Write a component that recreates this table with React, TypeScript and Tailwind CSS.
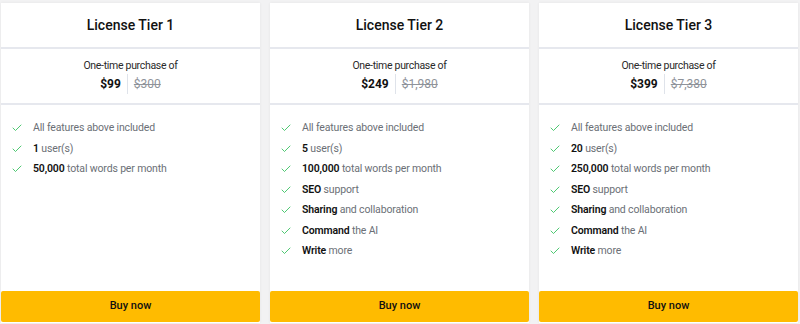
import { Check } from 'lucide-react';

interface Feature {
  bold?: string;
  rest: string;
}

interface Tier {
  name: string;
  price: string;
  oldPrice: string;
  features: Feature[];
}

const extra: Feature[] = [
  { bold: 'SEO', rest: ' support' },
  { bold: 'Sharing', rest: ' and collaboration' },
  { bold: 'Command', rest: ' the AI' },
  { bold: 'Write', rest: ' more' },
];

const tiers: Tier[] = [
  {
    name: 'License Tier 1',
    price: '$99',
    oldPrice: '$300',
    features: [
      { rest: 'All features above included' },
      { bold: '1', rest: ' user(s)' },
      { bold: '50,000', rest: ' total words per month' },
    ],
  },
  {
    name: 'License Tier 2',
    price: '$249',
    oldPrice: '$1,980',
    features: [
      { rest: 'All features above included' },
      { bold: '5', rest: ' user(s)' },
      { bold: '100,000', rest: ' total words per month' },
      ...extra,
    ],
  },
  {
    name: 'License Tier 3',
    price: '$399',
    oldPrice: '$7,380',
    features: [
      { rest: 'All features above included' },
      { bold: '20', rest: ' user(s)' },
      { bold: '250,000', rest: ' total words per month' },
      ...extra,
    ],
  },
];

function TierCard({ tier }: { tier: Tier }) {
  return (
    <div className="flex flex-col bg-white shadow-[0_0_3px_rgba(0,0,0,0.06)]">
      <div className="h-[46px] flex items-center justify-center border-b-2 border-[#e6e8ee]">
        <h3 className="text-[14px] font-medium text-[#111]">{tier.name}</h3>
      </div>
      <div className="h-[56px] flex flex-col items-center pt-[10px] border-b-2 border-[#e6e8ee]">
        <p className="text-[10.5px] leading-[14px] tracking-[-0.3px] text-[#2a2a2a]">One-time purchase of</p>
        <div className="h-[20px] mt-[1px] flex items-center">
          <span className="text-[12px] font-bold text-[#111] pr-[6px]">{tier.price}</span>
          <span className="h-[20px] w-px bg-[#dfe3ea]" />
          <span className="text-[12px] text-[#8f939a] line-through pl-[6px]">{tier.oldPrice}</span>
        </div>
      </div>
      <ul className="flex-1 pt-[13px] px-[10px]">
        {tier.features.map((f, i) => (
          <li key={i} className="h-[20.5px] flex items-center text-[10.5px] tracking-[-0.15px]">
            <Check className="w-[12px] h-[12px] text-[#2fbf5a] mr-[10px]" strokeWidth={1.7} />
            <span className="text-[#6b6f76]">
              {f.bold && <span className="font-semibold text-[#111]">{f.bold}</span>}
              {f.rest}
            </span>
          </li>
        ))}
      </ul>
      <button className="h-[31px] mb-[1px] rounded-[2px] bg-[#ffbb00] text-[11px] font-medium text-[#111]">
        Buy now
      </button>
    </div>
  );
}

export default function App() {
  return (
    <div className="h-[324px] bg-[#f2f2f3] pl-[1px] pr-[2px] pt-[3px] pb-[1px] grid grid-cols-3 gap-[10px] font-['Roboto',sans-serif]">
      {tiers.map((t) => (
        <TierCard key={t.name} tier={t} />
      ))}
    </div>
  );
}
